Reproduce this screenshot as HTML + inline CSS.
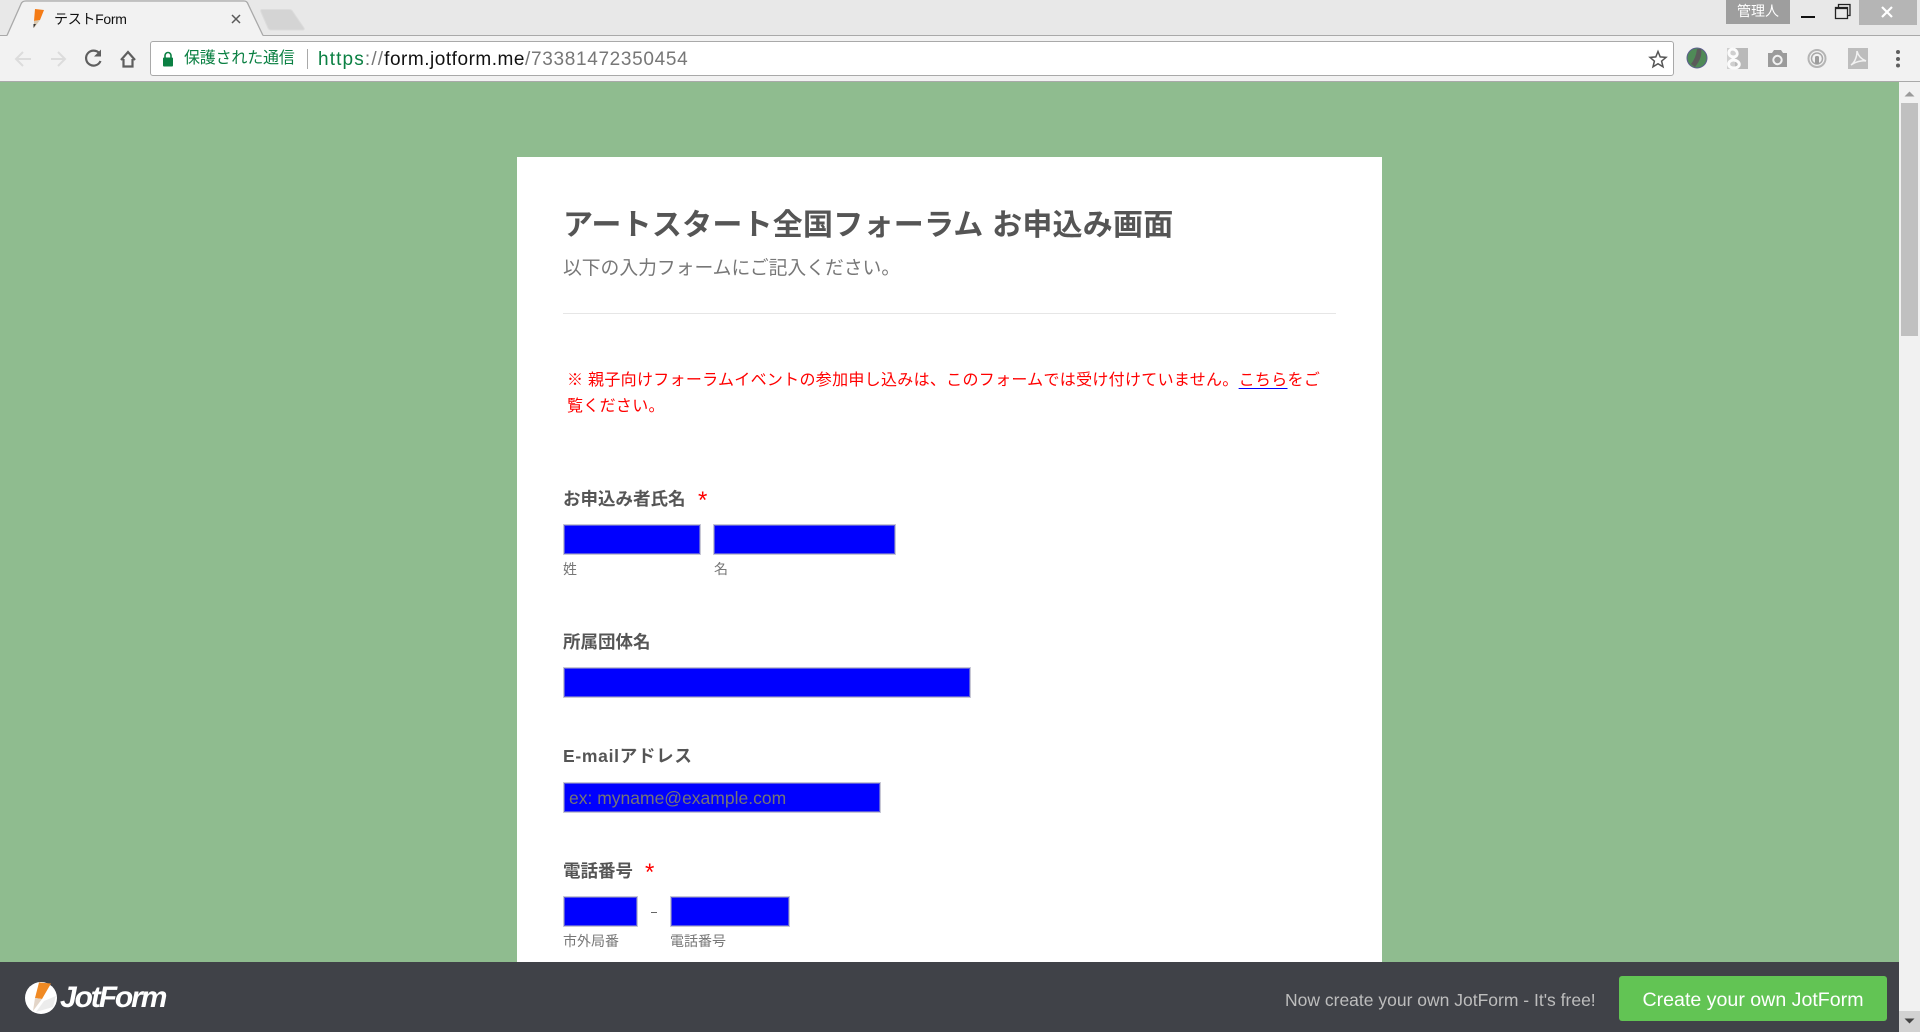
<!DOCTYPE html>
<html lang="ja">
<head>
<meta charset="utf-8">
<title>テストForm</title>
<style>
html,body{margin:0;padding:0;width:1920px;height:1032px;overflow:hidden;background:#8fbc8f;font-family:"Liberation Sans","Noto Sans CJK JP",sans-serif}
.a{position:absolute;white-space:nowrap}
.t{position:absolute;white-space:nowrap;line-height:30px;height:30px}
.inp{position:absolute;box-sizing:border-box;background:#00f;border:1px solid #c8c8d4;box-shadow:inset 0 0 0 1px #5a5ae0}
.lab{font-size:17.5px;font-weight:700;color:#555}
.sub{font-size:14px;color:#777}
.star{color:#f00;font-size:24px;font-weight:400}
</style>
</head>
<body>
<!-- chrome top -->
<div class="a" style="left:0;top:0;width:1920px;height:36px;background:#e8e8e8"></div>
<div class="a" style="left:0;top:35px;width:1920px;height:1px;background:#a9a9a9"></div>
<svg class="a" style="left:0;top:0" width="320" height="37" viewBox="0 0 320 37">
<path d="M7 36 L21 4 Q22 1 26 1 L244 1 Q247 1 248 4 L263 36 Z" fill="#f2f2f2"/>
<path d="M7 35.5 L21 4 Q22 1 26 1 L244 1 Q247 1 248 4 L263 35.5" fill="none" stroke="#a9a9a9" stroke-width="1.3"/>
<path d="M262 9.5 L289 9.5 Q292 9.5 293 12 L304 28 Q305 30 302 30 L271 30 Q269 30 268 28 L261 12 Q260 9.5 262 9.5 Z" fill="#d4d4d4" stroke="#dcdcdc"/>
<path d="M35 9 L44 10 L40 20 L34 21 Z" fill="#f47b16"/>
<path d="M34 21 L40 20 L34 28 Z" fill="#d8c8b0"/>
<path d="M33.5 24 L36 24 L33.5 28 Z" fill="#333"/>
<path d="M232 15 L240 23 M240 15 L232 23" stroke="#5a5a5a" stroke-width="1.5" fill="none"/>
</svg>
<div class="t" style="left:54px;top:4px;font-size:14px;color:#111;letter-spacing:-.3px">テストForm</div>

<!-- window controls -->
<div class="a" style="left:1726px;top:0;width:64px;height:24px;background:#9e9e9e;color:#fff;font-size:14px;line-height:22px;text-align:center">管理人</div>
<div class="a" style="left:1801px;top:16px;width:14px;height:2px;background:#111"></div>
<svg class="a" style="left:1833px;top:2px" width="20" height="18"><path d="M2.5 5.5H14.5V16.5H2.5Z M2.5 6.5H14.5 M5.5 5V2.5H17V13.5H14.5" fill="none" stroke="#222" stroke-width="1.3"/></svg>
<div class="a" style="left:1859px;top:0;width:58px;height:25px;background:#b5b5b5"></div>
<svg class="a" style="left:1880px;top:6px" width="14" height="12"><path d="M2 1 L12 11 M12 1 L2 11" stroke="#fff" stroke-width="2.2"/></svg>

<!-- toolbar -->
<div class="a" style="left:0;top:36px;width:1920px;height:45px;background:#f2f2f2"></div>
<div class="a" style="left:0;top:81px;width:1920px;height:1px;background:#a9a9a9"></div>
<svg class="a" style="left:0;top:36px" width="150" height="45" viewBox="0 36 150 45">
<path d="M31 59H16 M23 52 L16 59 L23 66" fill="none" stroke="#dcdcdc" stroke-width="2"/>
<path d="M51 59H65 M58 52 L65 59 L58 66" fill="none" stroke="#dcdcdc" stroke-width="2"/>
<path d="M99.5 53.5 A7.5 7.5 0 1 0 100.5 61" fill="none" stroke="#5f5f5f" stroke-width="2.2"/>
<path d="M101 49.5 V56.5 H94 Z" fill="#5f5f5f"/>
<path d="M121 60 L128 52 L135 60 M123.5 59 V66.5 H132.5 V59" fill="none" stroke="#5f5f5f" stroke-width="2.2"/>
</svg>
<div class="a" style="left:150px;top:41px;width:1524px;height:35px;box-sizing:border-box;background:#fff;border:1px solid #a9a9a9;border-radius:3px"></div>
<svg class="a" style="left:161px;top:50px" width="14" height="18"><path d="M4 8V5.5A3 3 0 0 1 10 5.5V8" fill="none" stroke="#0b8043" stroke-width="1.6"/><rect x="2" y="7.5" width="10" height="9" rx="1" fill="#0b8043"/></svg>
<div class="t" style="left:184px;top:44px;font-size:16px;color:#0b8043;letter-spacing:-.2px">保護された通信</div>
<div class="a" style="left:307px;top:49px;width:1px;height:20px;background:#a9a9a9"></div>
<div class="t" style="left:318px;top:45px;font-size:19px;color:#777;letter-spacing:.68px"><span style="color:#0b8043;letter-spacing:1.14px">https</span><span style="color:#777;letter-spacing:1.14px">://</span><span style="color:#111;letter-spacing:.52px">form.jotform.me</span>/73381472350454</div>
<svg class="a" style="left:1647px;top:48px" width="22" height="22"><path d="M11 3.5 L13.2 8.9 L19 9.4 L14.6 13.1 L16 18.8 L11 15.7 L6 18.8 L7.4 13.1 L3 9.4 L8.8 8.9 Z" fill="none" stroke="#555" stroke-width="1.5"/></svg>

<!-- extension icons -->
<svg class="a" style="left:1685px;top:46px" width="225" height="26" viewBox="1685 46 225 26">
<circle cx="1697" cy="58" r="10" fill="#4f8a57" stroke="#5d5d90" stroke-width="1"/>
<path d="M1701 49 Q1703 57 1695 67 L1691 64 Q1696 58 1697 49Z" fill="#5a5a5a"/>
<rect x="1735" y="48" width="13" height="21" fill="#b9b9b9"/>
<rect x="1727" y="48" width="8" height="21" fill="#cfcfcf"/>
<path d="M1733 49 C1728 49 1727 56 1733 57 C1739 57 1738 50 1733 49 M1733 57 L1733 60 C1727 61 1727 68 1734 68 C1741 68 1741 61 1734 60" fill="none" stroke="#fbfbfb" stroke-width="3"/>
<path d="M1768 53 H1772 L1774 50 H1781 L1783 53 H1787 V67 H1768 Z" fill="#9b9b9b"/>
<circle cx="1777.5" cy="60" r="4.2" fill="none" stroke="#f2f2f2" stroke-width="2"/>
<circle cx="1817" cy="58.5" r="8.5" fill="none" stroke="#b5b5b5" stroke-width="2"/>
<circle cx="1817" cy="58.5" r="5.5" fill="none" stroke="#a8a8a8" stroke-width="1.5"/>
<rect x="1815" y="56" width="4" height="8" rx="1.5" fill="#9b9b9b"/>
<rect x="1848" y="48" width="20" height="21" fill="#bdbdbd"/>
<path d="M1857 51 C1857 58 1854 63 1851 65 C1855 62 1862 60 1866 61 C1861 59 1858 55 1857 51" fill="none" stroke="#f2f2f2" stroke-width="1.5"/>
<circle cx="1898" cy="52" r="2" fill="#5f5f5f"/><circle cx="1898" cy="59" r="2" fill="#5f5f5f"/><circle cx="1898" cy="65.5" r="2" fill="#5f5f5f"/>
</svg>

<!-- scrollbar -->
<div class="a" style="left:1899px;top:82px;width:21px;height:950px;background:#f1f1f1"></div>
<div class="a" style="left:1901px;top:103px;width:17px;height:233px;background:#c0c0c0"></div>
<div class="a" style="left:1899px;top:1011px;width:21px;height:21px;background:#d2d2d2"></div>
<svg class="a" style="left:1899px;top:82px" width="21" height="21"><path d="M5.5 14.5 L10.5 9.5 L15.5 14.5Z" fill="#9a9a9a"/></svg>
<svg class="a" style="left:1899px;top:1011px" width="21" height="21"><path d="M5.5 7.5 L10.5 12.5 L15.5 7.5Z" fill="#444"/></svg>

<!-- card -->
<div class="a" style="left:517px;top:157px;width:865px;height:810px;background:#fff"></div>
<div class="t" style="left:563px;top:211px;font-size:30px;font-weight:700;color:#555;line-height:30px;letter-spacing:.23px">アートスタート全国フォーラム お申込み画面</div>
<div class="t" style="left:563px;top:253px;font-size:18.8px;color:#777">以下の入力フォームにご記入ください。</div>
<div class="a" style="left:563px;top:313px;width:773px;height:1px;background:#e6e6e6"></div>
<div class="t" style="left:567px;top:366px;font-size:16px;color:#f00;letter-spacing:.3px">※ 親子向けフォーラムイベントの参加申し込みは、このフォームでは受け付けていません。<u style="text-decoration-color:#00f;text-underline-offset:3px">こちら</u>をご</div>
<div class="t" style="left:567px;top:392px;font-size:16px;color:#f00;letter-spacing:.3px">覧ください。</div>

<div class="t lab" style="left:563px;top:484px">お申込み者氏名</div>
<div class="t star" style="left:698px;top:486px">*</div>
<div class="inp" style="left:563px;top:524px;width:138px;height:31px"></div>
<div class="inp" style="left:713px;top:524px;width:183px;height:31px"></div>
<div class="t sub" style="left:563px;top:554px">姓</div>
<div class="t sub" style="left:714px;top:554px">名</div>

<div class="t lab" style="left:563px;top:627px">所属団体名</div>
<div class="inp" style="left:563px;top:667px;width:408px;height:31px"></div>

<div class="t lab" style="left:563px;top:741px;letter-spacing:.7px">E-mailアドレス</div>
<div class="inp" style="left:563px;top:782px;width:318px;height:31px"></div>
<div class="t" style="left:569px;top:783px;font-size:17.5px;color:#757575">ex: myname@example.com</div>

<div class="t lab" style="left:563px;top:856px">電話番号</div>
<div class="t star" style="left:645px;top:858px">*</div>
<div class="inp" style="left:563px;top:896px;width:75px;height:31px"></div>
<div class="a" style="left:651px;top:912px;width:6px;height:1px;background:#666"></div>
<div class="inp" style="left:670px;top:896px;width:120px;height:31px"></div>
<div class="t sub" style="left:563px;top:926px">市外局番</div>
<div class="t sub" style="left:670px;top:926px">電話番号</div>

<!-- footer -->
<div class="a" style="left:0;top:962px;width:1899px;height:70px;background:#404248"></div>
<svg class="a" style="left:24px;top:981px" width="36" height="36" viewBox="0 0 36 36">
<circle cx="17" cy="17" r="16" fill="#fff"/>
<path d="M15 1.5 L27 2.5 L18 18 L11 17 Z" fill="#f08a24"/>
<path d="M11 17 L18 18 L9 30 Z" fill="#e3d5c8"/>
<path d="M20 20 L32 15 L29 26 L12 31 Z" fill="#ececec"/>
</svg>
<div class="t" style="left:60px;top:983px;font-size:30px;font-weight:700;font-style:italic;color:#fff;letter-spacing:-2.1px">JotForm</div>
<div class="t" style="left:1285px;top:985px;font-size:17.5px;color:#bdbdbd">Now create your own JotForm - It's free!</div>
<div class="a" style="left:1619px;top:976px;width:268px;height:45px;background:#62c454;border-radius:3px;color:#fff;font-size:19.6px;line-height:48px;text-align:center">Create your own JotForm</div>
</body>
</html>
